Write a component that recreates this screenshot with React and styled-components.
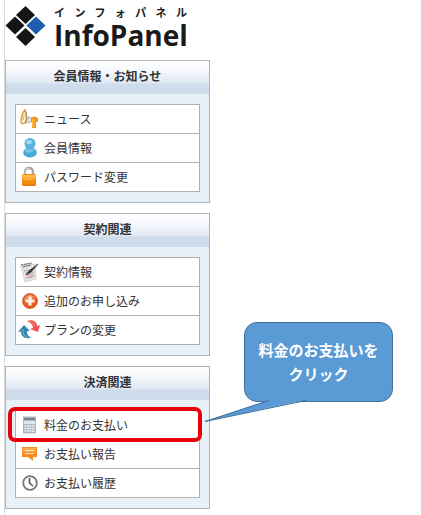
import React from 'react';
import styled, { createGlobalStyle } from 'styled-components';

const GlobalStyle = createGlobalStyle`
  * { box-sizing: border-box; }
  body {
    margin: 0;
    background: #fff;
    color: #333;
    font: 12px/18px "Noto Sans CJK JP", sans-serif;
  }
`;

const Page = styled.div`
  display: grid;
  grid-template-columns: minmax(206px, 26vw) 1fr;
  min-height: 100vh;
  padding-left: 4px;
`;

const Sidebar = styled.aside`
  border-left: 1px solid #dcdcdc;
  padding-bottom: 5px;
`;

const Brand = styled.header`
  display: flex;
  gap: 8px;
  height: 60px;
  padding-top: 5px;
`;

const BrandMark = styled.svg`
  width: 41px;
  height: 42px;
  flex: none;
`;

const BrandText = styled.div`
  width: 133px;
  color: #1a1a1a;
`;

const BrandKana = styled.div`
  font-size: 11px;
  font-weight: 700;
  line-height: 15px;
  text-align-last: justify;
`;

const BrandName = styled.div`
  font: 700 28px/30px "Open Sans", "Noto Sans", sans-serif;
`;

const Panels = styled.nav`
  display: grid;
  gap: 10px;
`;

const Panel = styled.section`
  border: 1px solid #b0b3b8;
  background: #e8f0f8;
`;

const PanelTitle = styled.h2`
  margin: 0;
  height: 33px;
  font-size: 12px;
  font-weight: 700;
  line-height: 30px;
  text-align: center;
  background: linear-gradient(#fff 0%, #f6f8fc 30%, #dfe8f3 66%, #cfdceb 70%, #cfdcec 100%);
`;

const MenuList = styled.ul`
  margin: 10px 9px;
  padding: 0;
  list-style: none;
  border: 1px solid #b0b0b0;
  background: #fff;
`;

const MenuItem = styled.li`
  position: relative;
  & + & { border-top: 1px solid #b0b0b0; }
`;

const MenuLink = styled.a`
  display: flex;
  align-items: center;
  gap: 4px;
  height: 28px;
  padding: 0 0 1px 3px;
  color: #333;
  text-decoration: none;
`;

const Icon = styled.svg`
  width: 21px;
  height: 22px;
  flex: none;
`;

const Highlight = styled.span`
  position: absolute;
  z-index: 1;
  inset: -4px -3px -3px -8px;
  border: 4px solid #ea0008;
  border-radius: 7px;
  pointer-events: none;
`;

const Callout = styled.div`
  position: absolute;
  left: calc(100% + 45px);
  bottom: 37px;
  width: 149px;
  padding: 15px 0;
  border: 1px solid #41719c;
  border-radius: 13px;
  background: #5b9bd5;
  color: #fff;
  font-size: 15px;
  font-weight: 700;
  line-height: 24px;
  text-align: center;
  white-space: nowrap;
`;

const CalloutTail = styled.svg`
  position: absolute;
  top: calc(100% - 1px);
  left: -41px;
  width: 104px;
  height: 23px;
`;

const drawings = {
  news: (
    <>
      <path d="M6 8 14 10 14 14 6 15Z" fill="#d8dde3" stroke="#a3a8b0" strokeWidth=".6" />
      <path d="M6 2C3 5 2 10 2 14c0 2 2 2 4 1l2-4Z" fill="#fff3d4" stroke="#d99631" strokeWidth="1.3" />
      <path d="M6 2c2 3 2 8 0 13" fill="none" stroke="#ae8a54" />
      <path d="M5 7 4 12" stroke="#edb85e" strokeWidth="1.4" />
      <path d="M12 10q3-3 7 0v4h-2v6h-4v-6h-1Z" fill="#f49b19" />
      <path d="M14 11v8" stroke="#ffd073" />
    </>
  ),
  member: (
    <>
      <ellipse cx="11" cy="15.5" rx="6.8" ry="5" fill="#4aa8d8" />
      <path d="M7 10h8l1 4H6Z" fill="#63b9e2" />
      <circle cx="11" cy="6.5" r="5.5" fill="#5bb4df" />
      <ellipse cx="10" cy="5" rx="3" ry="2" fill="#a0d9ef" />
      <ellipse cx="10" cy="14" rx="4" ry="1.7" fill="#7bc7e8" />
    </>
  ),
  lock: (
    <>
      <path d="M6 11V6q0-4 4-4t4 4v5" fill="none" stroke="#a6a59d" strokeWidth="2.4" />
      <path d="M6 10V6q0-4 4-4" fill="none" stroke="#d8d8d2" strokeWidth="1" />
      <rect x="3" y="8" width="14" height="12" rx="1.5" fill="#f58a0b" />
      <path d="M3 9h14v4q-7 3-14 0Z" fill="#ffad38" />
      <path d="M4 19h12" stroke="#d96e00" />
      <path d="M4 10h12" stroke="#ffc86a" />
    </>
  ),
  contract: (
    <>
      <path d="M2 5 16 3l1 15-11 3Z" fill="#e4e4e4" stroke="#c5c5c5" strokeWidth=".7" />
      <path d="m2 4 11-2M4 6l8-2" stroke="#666" strokeWidth="1.2" strokeDasharray="2 .6" />
      <path d="m5 10 10-2M6 12l9-1M7 14l8-1M7 17l6-1" stroke="#aaa" strokeWidth="1.2" />
      <path d="m9 16 6-1" stroke="#e99ba0" strokeWidth="1.4" />
      <path d="m7 14 3-4 9-7-7 8Z" fill="#333" stroke="#333" strokeWidth=".8" />
    </>
  ),
  add: (
    <>
      <circle cx="11" cy="11" r="7.5" fill="#e85c20" stroke="#c94a18" strokeWidth=".7" />
      <path d="M5 9q6-9 12 0-5-2-12 2Z" fill="#f58b53" />
      <path d="M11 6.5v9M6.5 11h9" stroke="#fff0e7" strokeWidth="3.2" />
    </>
  ),
  change: (
    <>
      <path d="M8 2c6-2 10 1 10 5l3-1-2 7-8-3 3-1c0-3-2-5-6-7Z" fill="#f05152" />
      <path d="M10 2.5q5 .5 6 5" fill="none" stroke="#f99393" />
      <path d="m5 6-6 7 3-.5c0 5 4 8 10 6-3-1-4-3-4-6.500l3 0Z" fill="#3386ae" />
      <path d="M4 10v3q0 4 4 5" fill="none" stroke="#73b9d3" />
    </>
  ),
  calculator: (
    <>
      <rect x="4.500" y="3" width="12" height="16" fill="#b1bac4" stroke="#a2aab4" strokeWidth=".8" />
      <path d="M5 4h11v2H5Z" fill="#79838e" />
      <path d="M5 7h11v3H5Z" fill="#dce9f3" />
      <path d="M5.5 12H16M5.5 14.5H16M5.5 17H16" stroke="#f1f2f4" strokeWidth="1.5" strokeDasharray="1.8 .7" />
    </>
  ),
  report: (
    <>
      <path d="M3 4h15v10h-4v4l-5-4H3Z" fill="#f58b23" />
      <path d="M4 5h13v4H4Z" fill="#ffa94c" />
      <path d="M6 7.5h9M6 10.5h9" stroke="#ffe3b9" strokeWidth="1.1" />
    </>
  ),
  history: (
    <>
      <circle cx="11" cy="11" r="6.8" fill="#fff" stroke="#777" strokeWidth="1.8" />
      <path d="M10.5 6v5l3.5 3" fill="none" stroke="#555" strokeWidth="1.6" />
    </>
  ),
};

const panels = [
  {
    title: '会員情報・お知らせ',
    items: [
      { icon: 'news', label: 'ニュース' },
      { icon: 'member', label: '会員情報' },
      { icon: 'lock', label: 'パスワード変更' },
    ],
  },
  {
    title: '契約関連',
    items: [
      { icon: 'contract', label: '契約情報' },
      { icon: 'add', label: '追加のお申し込み' },
      { icon: 'change', label: 'プランの変更' },
    ],
  },
  {
    title: '決済関連',
    items: [
      { icon: 'calculator', label: '料金のお支払い', hint: ['料金のお支払いを', 'クリック'] },
      { icon: 'report', label: 'お支払い報告' },
      { icon: 'history', label: 'お支払い履歴' },
    ],
  },
];

function Hint({ lines }) {
  return (
    <>
      <Highlight />
      <Callout role="note">
        {lines.map((line) => <div key={line}>{line}</div>)}
        <CalloutTail viewBox="0 0 104 23" aria-hidden="true">
          <path d="M65 0 1 21.5 102 0Z" fill="#5b9bd5" />
          <path d="M65 .5 1 21.5 102 .5" fill="none" stroke="#41719c" />
        </CalloutTail>
      </Callout>
    </>
  );
}

export default function App() {
  return (
    <>
      <GlobalStyle />
      <Page>
        <Sidebar>
          <Brand>
            <BrandMark viewBox="0 0 41 42" aria-hidden="true">
              <path d="m20.5 1 9.5 9-9.5 9-9.5-9ZM10 11.5l9.5 9-9.5 9-9.5-9ZM20.5 23l9.5 9-9.5 9-9.5-9Z" fill="#151515" />
              <path d="m31 11.5 9.5 9-9.5 9-9.5-9Z" fill="#1d5fae" />
            </BrandMark>
            <BrandText>
              <BrandKana>インフォパネル</BrandKana>
              <BrandName>InfoPanel</BrandName>
            </BrandText>
          </Brand>
          <Panels>
            {panels.map((panel) => (
              <Panel key={panel.title}>
                <PanelTitle>{panel.title}</PanelTitle>
                <MenuList>
                  {panel.items.map((item) => (
                    <MenuItem key={item.label}>
                      <MenuLink href="#">
                        <Icon viewBox="0 0 21 22" overflow="visible" aria-hidden="true">{drawings[item.icon]}</Icon>
                        {item.label}
                      </MenuLink>
                      {item.hint && <Hint lines={item.hint} />}
                    </MenuItem>
                  ))}
                </MenuList>
              </Panel>
            ))}
          </Panels>
        </Sidebar>
      </Page>
    </>
  );
}
